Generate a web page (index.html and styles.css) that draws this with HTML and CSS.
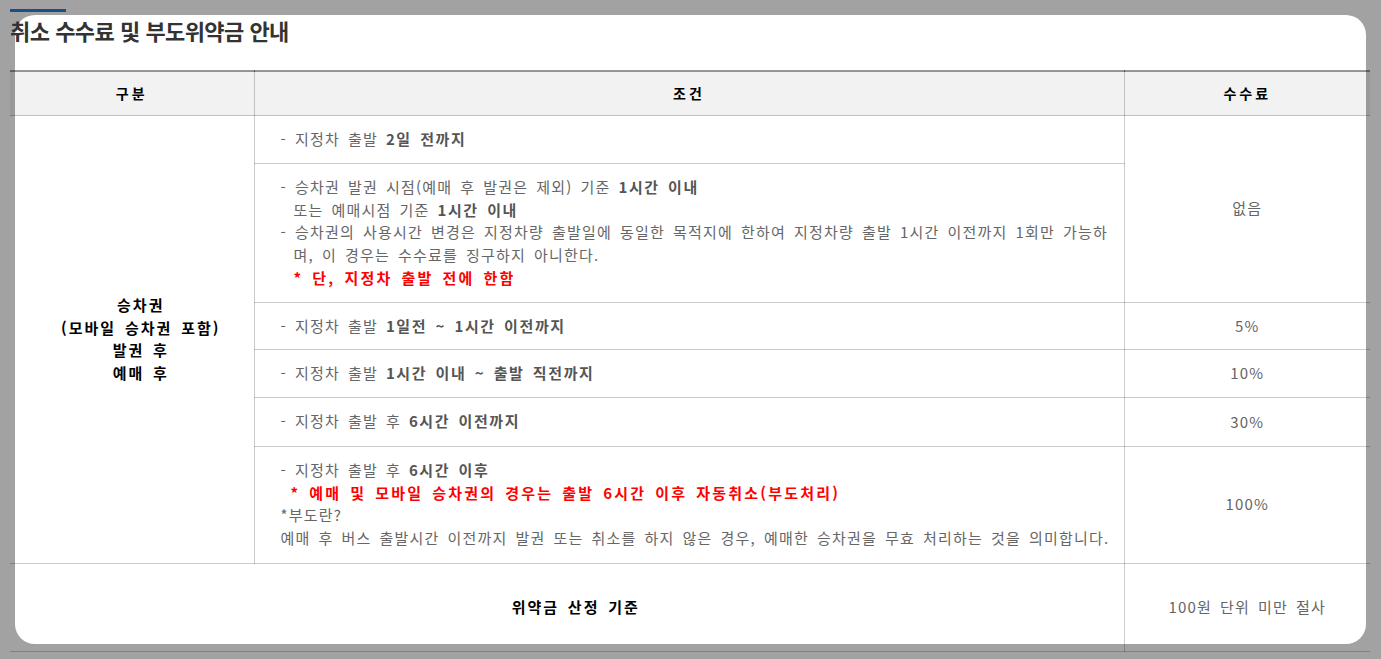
FILE: index.html
```html
<!DOCTYPE html>
<html lang="ko">
<head>
    <meta charset="UTF-8">
    <meta name="viewport" content="width=device-width, initial-scale=1.0">
    <title>취소 수수료 및 부도위약금 안내</title>
    <link rel="stylesheet" href="styles.css">
</head>
<body>
    <div class="panel"></div>

    <div class="content">
        <div class="title-bar"></div>
        <h3 class="title">취소 수수료 및 부도위약금 안내</h3>

        <table class="fee-table">
            <colgroup>
                <col class="col-type">
                <col class="col-cond">
                <col class="col-fee">
            </colgroup>
            <thead>
                <tr>
                    <th>구분</th>
                    <th>조건</th>
                    <th>수수료</th>
                </tr>
            </thead>
            <tbody>
                <tr>
                    <th rowspan="6" class="type">승차권<br>(모바일 승차권 포함)<br>발권 후<br>예매 후</th>
                    <td class="cond">
                        <p class="item">- 지정차 출발 <b>2일 전까지</b></p>
                    </td>
                    <td rowspan="2" class="fee">없음</td>
                </tr>
                <tr>
                    <td class="cond">
                        <p class="item">- 승차권 발권 시점(예매 후 발권은 제외) 기준 <b>1시간 이내</b><br>또는 예매시점 기준 <b>1시간 이내</b></p>
                        <p class="item">- 승차권의 사용시간 변경은 지정차량 출발일에 동일한 목적지에 한하여 지정차량 출발 1시간 이전까지 1회만 가능하<br>며, 이 경우는 수수료를 징구하지 아니한다.</p>
                        <p class="note">* 단, 지정차 출발 전에 한함</p>
                    </td>
                </tr>
                <tr>
                    <td class="cond">
                        <p class="item">- 지정차 출발 <b>1일전 ~ 1시간 이전까지</b></p>
                    </td>
                    <td class="fee">5%</td>
                </tr>
                <tr>
                    <td class="cond">
                        <p class="item">- 지정차 출발 <b>1시간 이내 ~ 출발 직전까지</b></p>
                    </td>
                    <td class="fee">10%</td>
                </tr>
                <tr>
                    <td class="cond cond-mid">
                        <p class="item">- 지정차 출발 후 <b>6시간 이전까지</b></p>
                    </td>
                    <td class="fee">30%</td>
                </tr>
                <tr>
                    <td class="cond cond-last">
                        <p class="item">- 지정차 출발 후 <b>6시간 이후</b></p>
                        <p class="note note-small">* 예매 및 모바일 승차권의 경우는 출발 6시간 이후 자동취소(부도처리)</p>
                        <p>*부도란?</p>
                        <p>예매 후 버스 출발시간 이전까지 발권 또는 취소를 하지 않은 경우, 예매한 승차권을 무효 처리하는 것을 의미합니다.</p>
                    </td>
                    <td class="fee">100%</td>
                </tr>
                <tr>
                    <th colspan="2" class="rule">위약금 산정 기준</th>
                    <td class="fee rule-fee">100원 단위 미만 절사</td>
                </tr>
            </tbody>
        </table>
    </div>
</body>
</html>
```

FILE: styles.css
```css
html, body {
    margin: 0;
    height: 100%;
    overflow: hidden;
}
body {
    background-color: #a2a2a2;
    font-family: "Noto Sans CJK KR", "Noto Sans", sans-serif;
    font-size: 15px;
    position: relative;
}

/* white popup sheet that sits behind the content */
.panel {
    position: absolute;
    left: 15px;
    top: 15px;
    width: 1351px;
    height: 629px;
    background-color: #fff;
    border-radius: 20px;
}
.content {
    position: relative;
    padding: 9px 11px 0 10px;
}
.title-bar {
    width: 56px;
    height: 3px;
    background-color: #1d4f86;
}
.title {
    margin: 3px 0 25px;
    font-size: 22px;
    line-height: 30px;
    font-weight: bold;
    color: #333;
    letter-spacing: -0.6px;
    word-spacing: 0.3px;
}

.fee-table {
    width: 1360px;
    table-layout: fixed;
    border-collapse: collapse;
    border-top: 2px solid rgba(0, 0, 0, 0.4);
    letter-spacing: 1.2px;
    word-spacing: 2.6px;
}
.col-type {
    width: 244px;
}
.col-cond {
    width: 870px;
}
.col-fee {
    width: 246px;
}
.fee-table th,
.fee-table td {
    border: 1px solid rgba(0, 0, 0, 0.2);
    line-height: 22.75px;
    padding: 12px 0;
    vertical-align: middle;
}
.fee-table tr > :first-child {
    border-left: none;
}
.fee-table tr > :last-child {
    border-right: none;
}
.fee-table thead th {
    background-color: rgba(0, 0, 0, 0.05);
    color: #000;
    font-size: 14px;
    font-weight: bold;
    letter-spacing: 3px;
    line-height: 23px;
    padding: 10px 0;
    border-top: none;
}
.type, .rule {
    color: #000;
    font-weight: bold;
    letter-spacing: 2px;
    text-align: center;
}
.type {
    padding-left: 18px !important;
}
.cond {
    text-align: left;
    color: #666;
    padding: 12px 4px 12px 26px !important;
}
.cond-mid {
    padding-bottom: 13px !important;
}
.cond-last {
    padding-bottom: 13px !important;
}
.cond p {
    margin: 0;
    white-space: nowrap;
}
.cond b {
    color: #555;
    letter-spacing: 1.6px;
}
.item {
    padding-left: 13px;
    text-indent: -13px;
}
.note {
    padding-left: 13px;
    color: #f00;
    font-weight: bold;
    letter-spacing: 2.2px;
}
.note-small {
    padding-left: 10px;
}
.fee {
    text-align: center;
    color: #666;
}
.rule {
    padding: 32px 0 32px 18px !important;
}
.rule-fee {
    padding: 32px 0 !important;
}
```
